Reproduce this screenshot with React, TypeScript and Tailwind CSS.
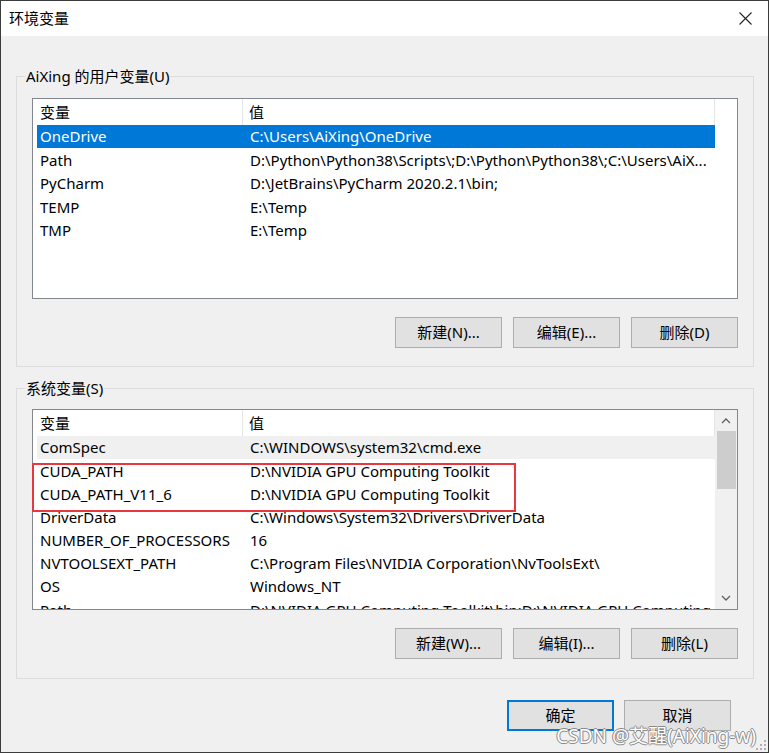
import React from "react";

const font = "font-['Noto_Sans','Noto_Sans_CJK_SC',sans-serif]";

const userVars: [string, string][] = [
  ["OneDrive", "C:\\Users\\AiXing\\OneDrive"],
  ["Path", "D:\\Python\\Python38\\Scripts\\;D:\\Python\\Python38\\;C:\\Users\\AiX..."],
  ["PyCharm", "D:\\JetBrains\\PyCharm 2020.2.1\\bin;"],
  ["TEMP", "E:\\Temp"],
  ["TMP", "E:\\Temp"],
];

const sysVars: [string, string][] = [
  ["ComSpec", "C:\\WINDOWS\\system32\\cmd.exe"],
  ["CUDA_PATH", "D:\\NVIDIA GPU Computing Toolkit"],
  ["CUDA_PATH_V11_6", "D:\\NVIDIA GPU Computing Toolkit"],
  ["DriverData", "C:\\Windows\\System32\\Drivers\\DriverData"],
  ["NUMBER_OF_PROCESSORS", "16"],
  ["NVTOOLSEXT_PATH", "C:\\Program Files\\NVIDIA Corporation\\NvToolsExt\\"],
  ["OS", "Windows_NT"],
  ["Path", "D:\\NVIDIA GPU Computing Toolkit\\bin;D:\\NVIDIA GPU Computing"],
];

function Header() {
  return (
    <div className="flex h-[26px] w-[682px] items-center bg-white text-[15px] text-black">
      <div className="flex h-full w-[210px] items-center border-r border-[#e5e5e5] pl-[7px]">变量</div>
      <div className="flex h-full w-[472px] items-center border-r border-[#e5e5e5] pl-[6px]">值</div>
    </div>
  );
}

function Row({ name, value, cls, h }: { name: string; value: string; cls: string; h: string }) {
  return (
    <div className={`ml-[4px] flex w-[678px] items-center whitespace-nowrap text-[15px] ${h} ${cls}`}>
      <div className="w-[206px] overflow-hidden pl-[3px]">{name}</div>
      <div className="w-[472px] overflow-hidden pl-[7px]">{value}</div>
    </div>
  );
}

function Btn({ label, primary }: { label: string; primary?: boolean }) {
  return (
    <button
      className={`flex h-[31px] w-[107px] items-center justify-center bg-[#e1e1e1] text-[15px] text-black ${
        primary ? "border-2 border-[#0078d7]" : "border border-[#adadad]"
      }`}
    >
      {label}
    </button>
  );
}

function Group({ title, children }: { title: string; children: React.ReactNode }) {
  return (
    <div className="ml-[15px] w-[738px] border border-[#dcdcdc] px-[15px]">
      <div className="-mt-[11px] -ml-[7px] h-[20px] w-fit bg-[#f0f0f0] px-[1px] text-[15px] leading-[20px] text-black">
        {title}
      </div>
      {children}
    </div>
  );
}

function Chevron({ up }: { up?: boolean }) {
  return (
    <svg width="10" height="6" viewBox="0 0 10 6">
      <polyline
        points={up ? "1,5 5,1 9,5" : "1,1 5,5 9,1"}
        fill="none"
        stroke="#606060"
        strokeWidth="1.3"
      />
    </svg>
  );
}

export default function App() {
  return (
    <div className={`relative h-[753px] w-[769px] border border-[#3c3c3c] bg-[#f0f0f0] ${font}`}>
      {/* title bar */}
      <div className="flex h-[35px] items-center justify-between bg-white pl-[8px] pr-[16px] text-[15px] text-black">
        <span>环境变量</span>
        <svg width="13" height="13" viewBox="0 0 13 13">
          <line x1="0.5" y1="0.5" x2="12.5" y2="12.5" stroke="#222" strokeWidth="1.1" />
          <line x1="12.5" y1="0.5" x2="0.5" y2="12.5" stroke="#222" strokeWidth="1.1" />
        </svg>
      </div>

      <div className="pt-[40px]">
        <Group title="AiXing 的用户变量(U)">
          <div className="mt-[12px] h-[201px] w-[706px] overflow-hidden border border-[#828790] bg-white">
            <Header />
            {userVars.map(([n, v], i) => (
              <Row
                key={n}
                name={n}
                value={v}
                h="h-[23.4px]"
                cls={i === 0 ? "bg-[#0078d7] text-white" : "text-black"}
              />
            ))}
          </div>
          <div className="mt-[18px] flex justify-end gap-[11px] pb-[18px]">
            <Btn label="新建(N)..." />
            <Btn label="编辑(E)..." />
            <Btn label="删除(D)" />
          </div>
        </Group>

        <div className="mt-[21px]">
          <Group title="系统变量(S)">
            <div className="relative mt-[11px] flex h-[201px] w-[706px] border border-[#828790] bg-white">
              <div className="w-[682px] overflow-hidden">
                <Header />
                {sysVars.map(([n, v], i) => (
                  <Row
                    key={n}
                    name={n}
                    value={v}
                    h="h-[23.2px]"
                    cls={i === 0 ? "bg-[#f0f0f0] text-black" : "text-black"}
                  />
                ))}
              </div>
              <div className="flex w-[22px] flex-col items-center bg-[#f0f0f0]">
                <div className="flex h-[20px] items-center pt-[2px]">
                  <Chevron up />
                </div>
                <div className="mt-[1px] h-[58px] w-[19px] bg-[#cdcdcd]" />
                <div className="flex-1" />
                <div className="flex h-[22px] items-center">
                  <Chevron />
                </div>
              </div>
              {/* red annotation box */}
              <div className="absolute left-[-1px] top-[53px] h-[49px] w-[484px] border-2 border-[#e8383d]" />
            </div>
            <div className="mt-[18px] flex justify-end gap-[11px] pb-[19px]">
              <Btn label="新建(W)..." />
              <Btn label="编辑(I)..." />
              <Btn label="删除(L)" />
            </div>
          </Group>
        </div>

        <div className="mt-[21px] flex justify-end gap-[10px] pr-[37px]">
          <Btn label="确定" primary />
          <Btn label="取消" />
        </div>
      </div>

      {/* watermark */}
      <div className="absolute bottom-[6px] right-[12px] text-[19px] leading-none text-white [text-shadow:1px_0_#8a8a8a,-1px_0_#8a8a8a,0_1px_#8a8a8a,0_-1px_#8a8a8a]">
        CSDN @艾醒(AiXing-w)
      </div>

      {/* resize grip */}
      <svg className="absolute bottom-[1px] right-[1px]" width="12" height="12" viewBox="0 0 12 12">
        <rect x="9" y="1" width="2" height="2" fill="#b0b0b0" />
        <rect x="5" y="5" width="2" height="2" fill="#b0b0b0" />
        <rect x="9" y="5" width="2" height="2" fill="#b0b0b0" />
        <rect x="1" y="9" width="2" height="2" fill="#b0b0b0" />
        <rect x="5" y="9" width="2" height="2" fill="#b0b0b0" />
        <rect x="9" y="9" width="2" height="2" fill="#b0b0b0" />
      </svg>
    </div>
  );
}
